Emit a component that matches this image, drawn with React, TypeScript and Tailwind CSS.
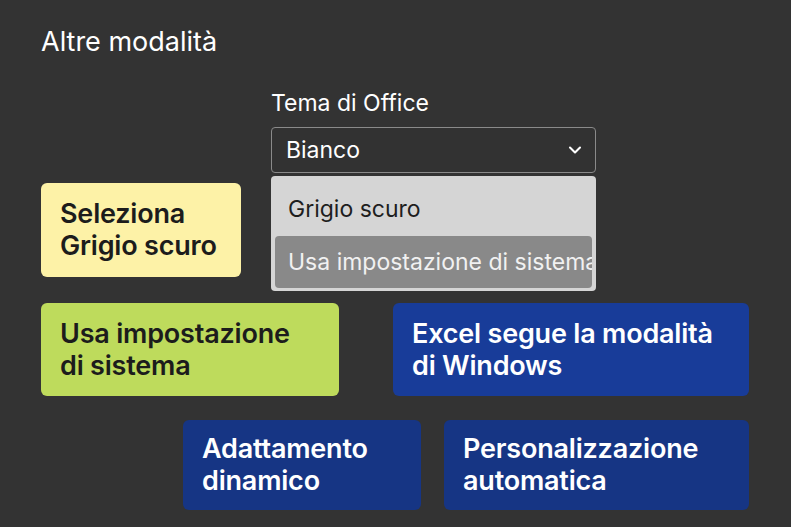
import { ChevronDown } from 'lucide-react'

const font = { fontFamily: 'Inter, "Noto Sans", sans-serif' }

function Card({ className, children }: { className: string; children: React.ReactNode }) {
  return (
    <div className={`rounded-[6px] px-[19px] flex items-center text-[27px] leading-[32px] font-semibold tracking-[-0.2px] ${className}`}>
      <div>{children}</div>
    </div>
  )
}

export default function App() {
  return (
    <div className="w-[791px] h-[527px] bg-[#333333] overflow-hidden text-white" style={font}>
      <div className="pt-[26px] pl-[41px]">
        <h1 className="text-[27px] leading-[32px] font-normal">Altre modalità</h1>

        <div className="ml-[230px] mt-[31px] w-[325px] relative">
          <div className="text-[23px] leading-[28px]">Tema di Office</div>
          <div className="mt-[10px] h-[46px] rounded-[4px] border border-[#8a8a8a] bg-[#323232] flex items-center justify-between pl-[14px] pr-[10px]">
            <span className="text-[23px]">Bianco</span>
            <ChevronDown size={20} strokeWidth={2.5} />
          </div>
          <div className="absolute left-0 right-0 top-full mt-[3px] z-10 h-[115px] rounded-[4px] bg-[#d5d5d5] px-[4px] pt-[19px] flex flex-col">
            <div className="pl-[13px] text-[23px] leading-[28px] text-[#1e1e1e]">Grigio scuro</div>
            <div className="mt-[13px] h-[52px] rounded-[4px] bg-[#898989] pl-[13px] flex items-center text-[23px] text-[#f1f1f1] whitespace-nowrap overflow-hidden">
              Usa impostazione di sistema
            </div>
          </div>
        </div>

        <Card className="mt-[10px] w-[200px] h-[94px] bg-[#fdf2a7] text-[#1c1c1c]">
          Seleziona
          <br />
          Grigio scuro
        </Card>

        <div className="mt-[26px] flex gap-[54px]">
          <Card className="w-[298px] h-[93px] bg-[#bedb5c] text-[#1c1c1c]">
            Usa impostazione
            <br />
            di sistema
          </Card>
          <Card className="w-[356px] h-[93px] bg-[#183c99] text-white">
            Excel segue la modalità
            <br />
            di Windows
          </Card>
        </div>

        <div className="mt-[24px] ml-[142px] flex gap-[23px]">
          <Card className="w-[238px] h-[90px] bg-[#163584] text-white">
            Adattamento
            <br />
            dinamico
          </Card>
          <Card className="w-[305px] h-[90px] bg-[#163584] text-white">
            Personalizzazione
            <br />
            automatica
          </Card>
        </div>
      </div>
    </div>
  )
}
